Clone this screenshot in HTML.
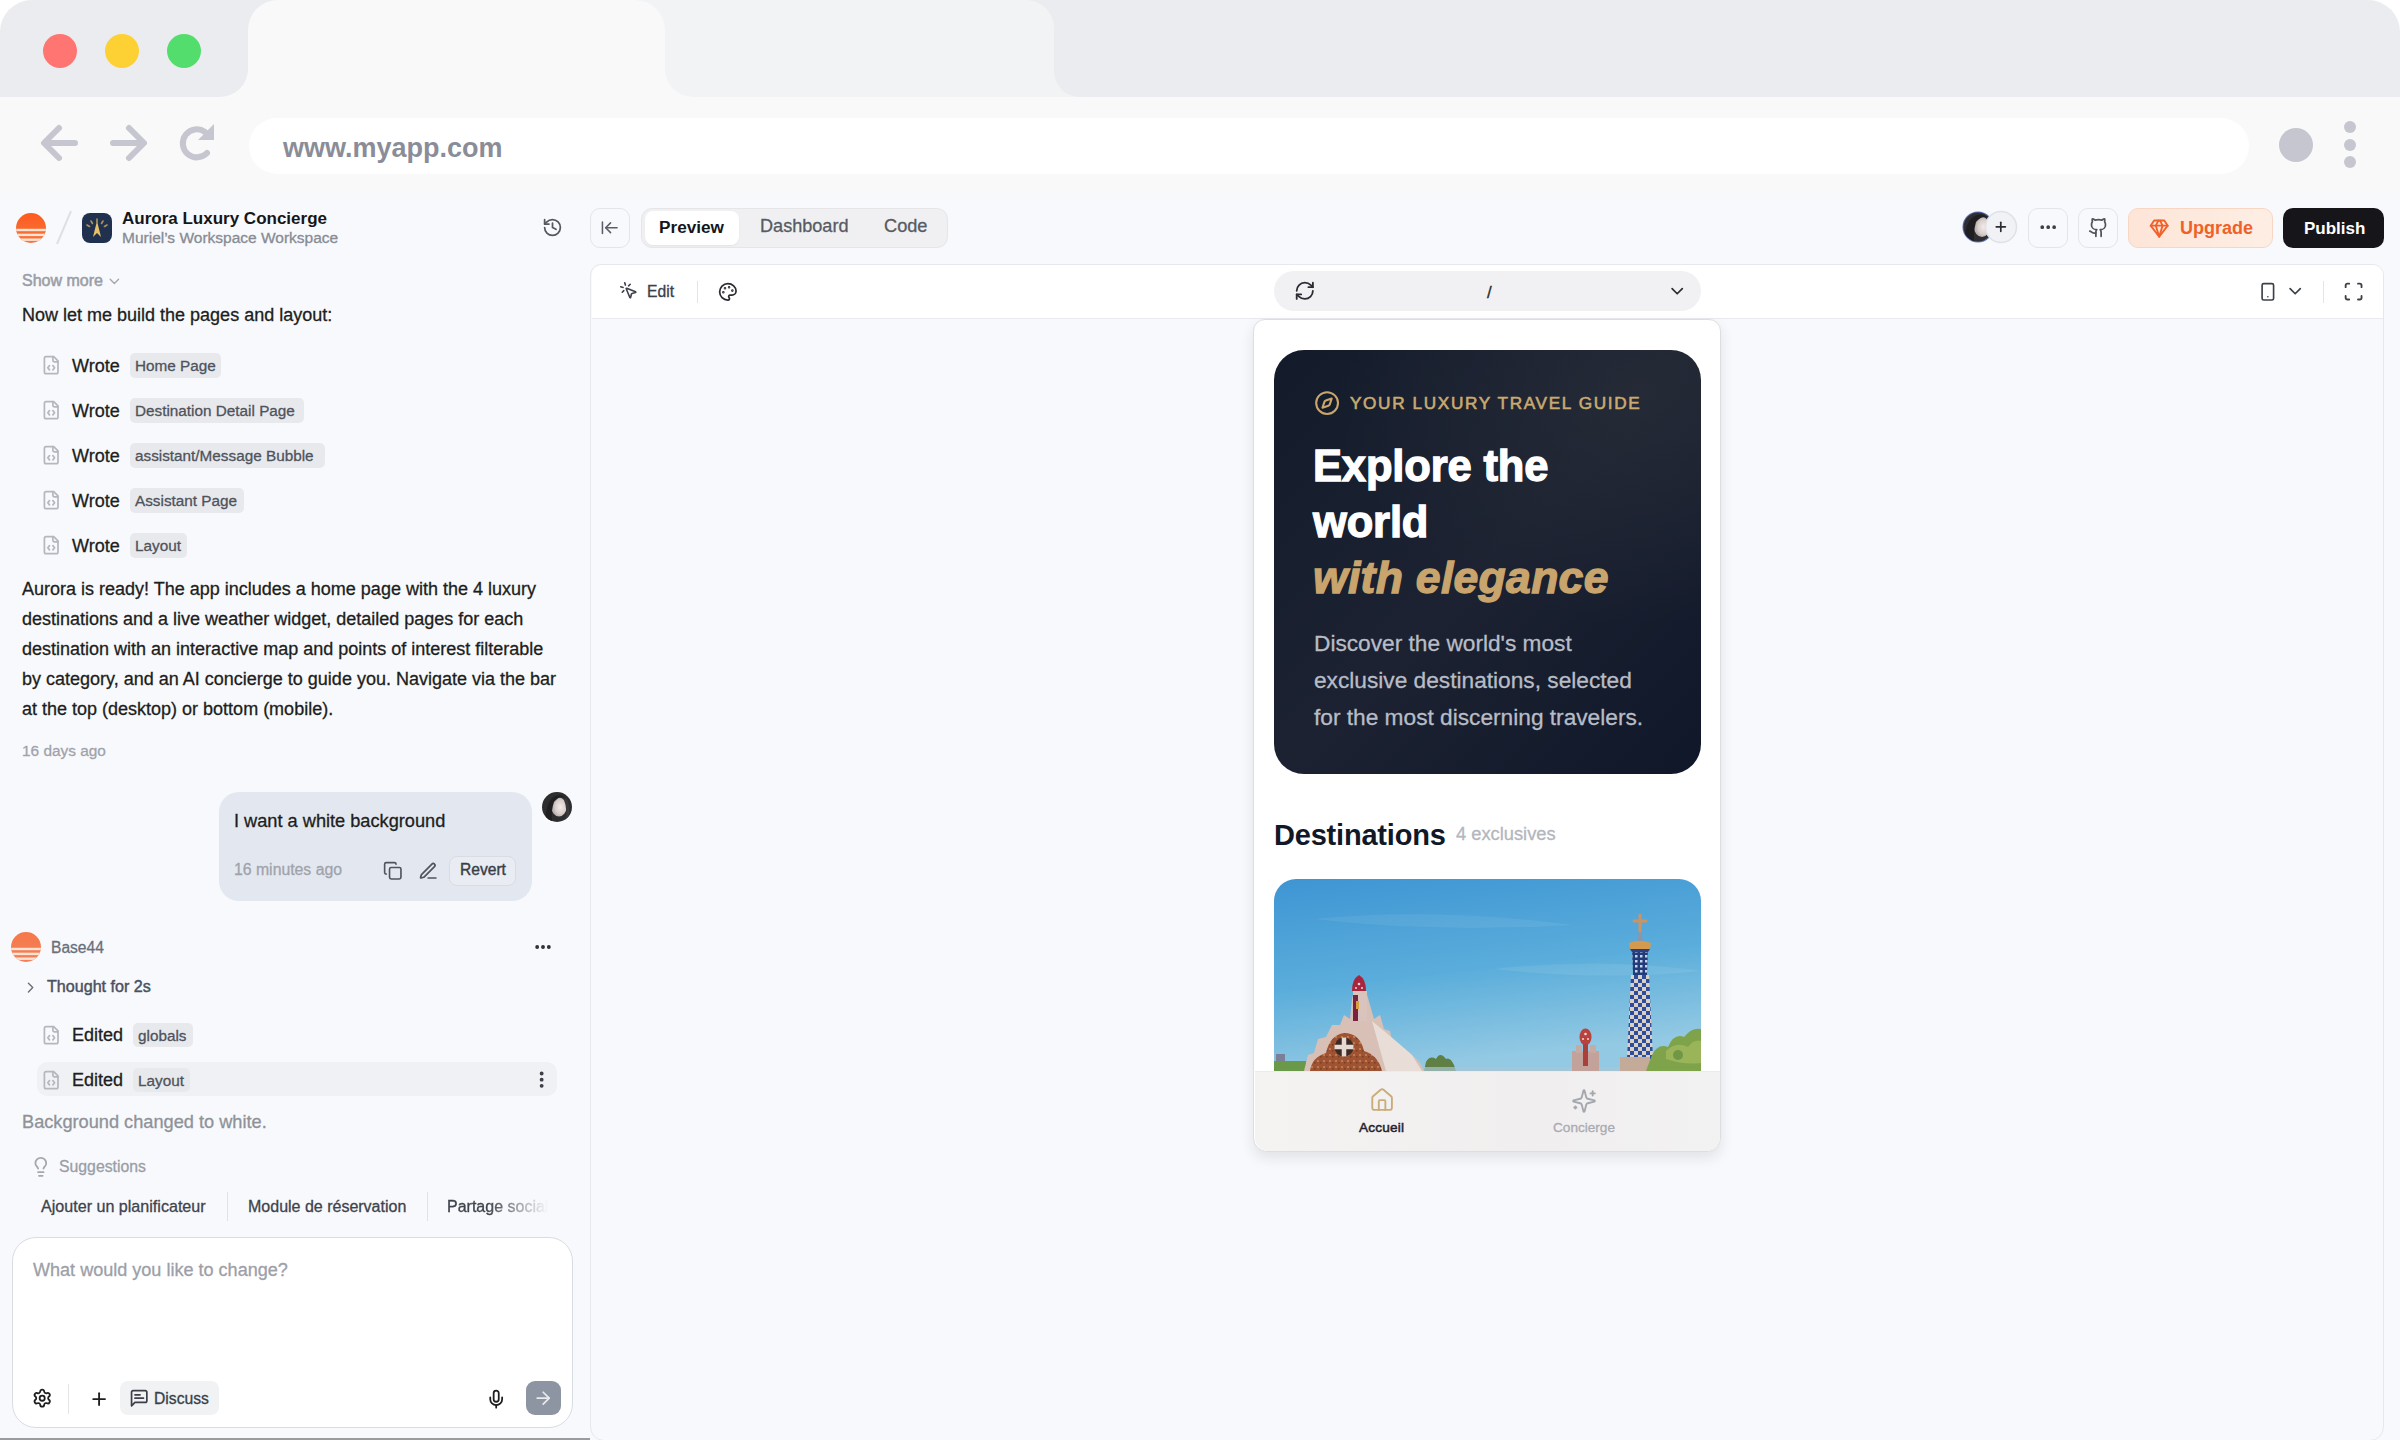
<!DOCTYPE html>
<html><head><meta charset="utf-8"><style>
html,body{margin:0;padding:0;width:2400px;height:1440px;overflow:hidden;background:#ffffff;}
body{position:relative;font-family:"Liberation Sans", sans-serif;}
.t{position:absolute;white-space:nowrap;-webkit-text-stroke:0.3px currentColor;}
.p{position:absolute;}
.r{position:absolute;}
</style></head><body>
<svg class="r" style="left:0px;top:0px;" width="2400" height="200" viewBox="0 0 2400 200">
<rect x="0" y="60" width="2400" height="140" fill="#f9f9f9"/>
<path d="M0,97 L0,32 A32,32 0 0 1 32,0 L2368,0 A32,32 0 0 1 2400,32 L2400,97 Z" fill="#ebecef"/>
<path d="M640,97 L640,0 L1026,0 A28,28 0 0 1 1054,28 L1054,71 A26,26 0 0 0 1080,97 Z" fill="#f2f3f5"/>
<path d="M220,97 A28,28 0 0 0 248,69 L248,30 A30,30 0 0 1 278,0 L635,0 A30,30 0 0 1 665,30 L665,69 A28,28 0 0 0 693,97 Z" fill="#f9f9f9"/>
<circle cx="60" cy="51" r="17" fill="#fe7572"/>
<circle cx="122" cy="51" r="17" fill="#fdd033"/>
<circle cx="184" cy="51" r="17" fill="#52dd6c"/>
<g stroke="#c5c6cf" stroke-width="6" fill="none" stroke-linecap="round" stroke-linejoin="round">
<path d="M75,143 L45,143 M59,128 L44,143 L59,158"/>
<path d="M113,143 L143,143 M129,128 L144,143 L129,158"/>
<path d="M207,153 A14,14 0 1 1 205,132"/>
</g>
<path d="M214,124 L214,140 L198,140 Z" fill="#c5c6cf"/>
<rect x="249" y="118" width="2000" height="56" rx="28" fill="#ffffff"/>
<circle cx="2296" cy="145" r="17" fill="#c5c6cf"/>
<circle cx="2350" cy="127" r="6" fill="#c5c6cf"/>
<circle cx="2350" cy="145" r="6" fill="#c5c6cf"/>
<circle cx="2350" cy="162" r="6" fill="#c5c6cf"/>
</svg>
<div class="t" style="left:283px;top:130.6px;font-size:27px;line-height:34px;color:#8a8d98;font-weight:700;font-style:normal;letter-spacing:0px;-webkit-text-stroke:0;">www.myapp.com</div>
<div class="r" style="left:0px;top:197px;width:2400px;height:1243px;background:#f8f9fc;"></div>
<div class="r" style="left:0px;top:190px;width:2400px;height:8px;background:linear-gradient(180deg,#f9f9f9,#f8f9fc);"></div>
<svg class="r" style="left:16px;top:213px;" width="30" height="30" viewBox="0 0 30 30"><defs><linearGradient id="lg1" x1="0" y1="0" x2="0" y2="1"><stop offset="0" stop-color="#ff5a1e"/><stop offset="1" stop-color="#f4773f"/></linearGradient>
<clipPath id="lg1c"><circle cx="15" cy="15" r="15"/></clipPath></defs>
<g clip-path="url(#lg1c)"><rect width="30" height="30" fill="url(#lg1)"/>
<rect x="0" y="15.8" width="30" height="2.4" fill="#fde3d4"/>
<rect x="0" y="20.7" width="30" height="2.4" fill="#fde3d4"/>
<rect x="0" y="25.5" width="30" height="2.4" fill="#fde3d4"/></g></svg>
<svg class="r" style="left:54px;top:208px;" width="20" height="40" viewBox="0 0 20 40"><line x1="3" y1="36" x2="17" y2="3" stroke="#dfe0e5" stroke-width="2"/></svg>
<svg class="r" style="left:82px;top:213px;" width="30" height="30" viewBox="0 0 30 30"><rect width="30" height="30" rx="8" fill="#20314f"/>
<g stroke="#c9a45a" stroke-width="1.6" stroke-linecap="round" opacity="0.85">
<line x1="15" y1="6" x2="15" y2="9"/><line x1="9" y1="8" x2="10.5" y2="10.5"/><line x1="21" y1="8" x2="19.5" y2="10.5"/>
<line x1="5" y1="12" x2="7.5" y2="13.5"/><line x1="25" y1="12" x2="22.5" y2="13.5"/></g>
<path d="M15,8 L19,24 L15,20 L11,24 Z" fill="#e6c16a"/></svg>
<div class="t" style="left:122px;top:207.6px;font-size:17px;line-height:21px;color:#15161a;font-weight:700;font-style:normal;letter-spacing:0px;-webkit-text-stroke:0;">Aurora Luxury Concierge</div>
<div class="t" style="left:122px;top:228.1px;font-size:15.5px;line-height:19px;color:#878b94;font-weight:400;font-style:normal;letter-spacing:0px;">Muriel’s Workspace Workspace</div>
<svg class="r" style="left:542.00px;top:217.40px;color:#55595f;" width="21" height="21" viewBox="0 0 24 24" fill="none" stroke="currentColor" stroke-width="2" stroke-linecap="round" stroke-linejoin="round"><path d="M3 12a9 9 0 1 0 9-9 9.75 9.75 0 0 0-6.74 2.74L3 8"/><path d="M3 3v5h5"/><path d="M12 7v5l4 2"/></svg>
<div class="t" style="left:22px;top:270.5px;font-size:16px;line-height:20px;color:#9a9ea7;font-weight:400;font-style:normal;letter-spacing:0px;-webkit-text-stroke:0.55px #9a9ea7;">Show more</div>
<svg class="r" style="left:106.00px;top:272.60px;color:#a5a9b0;" width="16.8" height="16.8" viewBox="0 0 24 24" fill="none" stroke="currentColor" stroke-width="2" stroke-linecap="round" stroke-linejoin="round"><path d="m6 9 6 6 6-6"/></svg>
<div class="t" style="left:22px;top:303.8px;font-size:18px;line-height:22px;color:#1d1e20;font-weight:400;font-style:normal;letter-spacing:0px;">Now let me build the pages and layout:</div>
<svg class="r" style="left:40.80px;top:354.80px;color:#b4b7be;" width="20.4" height="20.4" viewBox="0 0 24 24" fill="none" stroke="currentColor" stroke-width="2" stroke-linecap="round" stroke-linejoin="round"><path d="M10 12.5 8 15l2 2.5"/><path d="m14 12.5 2 2.5-2 2.5"/><path d="M14 2v4a2 2 0 0 0 2 2h4"/><path d="M15 2H6a2 2 0 0 0-2 2v16a2 2 0 0 0 2 2h12a2 2 0 0 0 2-2V7z"/></svg>
<div class="t" style="left:72px;top:354.8px;font-size:18px;line-height:22px;color:#1d1e20;font-weight:400;font-style:normal;letter-spacing:0px;">Wrote</div>
<div class="r" style="left:130px;top:353px;width:91px;height:25px;background:#e8e9ed;border-radius:5px;"></div>
<div class="t" style="left:135px;top:356.2px;font-size:15.3px;line-height:19px;color:#4f535b;font-weight:400;font-style:normal;letter-spacing:0px;">Home Page</div>
<svg class="r" style="left:40.80px;top:399.80px;color:#b4b7be;" width="20.4" height="20.4" viewBox="0 0 24 24" fill="none" stroke="currentColor" stroke-width="2" stroke-linecap="round" stroke-linejoin="round"><path d="M10 12.5 8 15l2 2.5"/><path d="m14 12.5 2 2.5-2 2.5"/><path d="M14 2v4a2 2 0 0 0 2 2h4"/><path d="M15 2H6a2 2 0 0 0-2 2v16a2 2 0 0 0 2 2h12a2 2 0 0 0 2-2V7z"/></svg>
<div class="t" style="left:72px;top:399.8px;font-size:18px;line-height:22px;color:#1d1e20;font-weight:400;font-style:normal;letter-spacing:0px;">Wrote</div>
<div class="r" style="left:130px;top:398px;width:174px;height:25px;background:#e8e9ed;border-radius:5px;"></div>
<div class="t" style="left:135px;top:401.2px;font-size:15.3px;line-height:19px;color:#4f535b;font-weight:400;font-style:normal;letter-spacing:0px;">Destination Detail Page</div>
<svg class="r" style="left:40.80px;top:444.80px;color:#b4b7be;" width="20.4" height="20.4" viewBox="0 0 24 24" fill="none" stroke="currentColor" stroke-width="2" stroke-linecap="round" stroke-linejoin="round"><path d="M10 12.5 8 15l2 2.5"/><path d="m14 12.5 2 2.5-2 2.5"/><path d="M14 2v4a2 2 0 0 0 2 2h4"/><path d="M15 2H6a2 2 0 0 0-2 2v16a2 2 0 0 0 2 2h12a2 2 0 0 0 2-2V7z"/></svg>
<div class="t" style="left:72px;top:444.8px;font-size:18px;line-height:22px;color:#1d1e20;font-weight:400;font-style:normal;letter-spacing:0px;">Wrote</div>
<div class="r" style="left:130px;top:443px;width:195px;height:25px;background:#e8e9ed;border-radius:5px;"></div>
<div class="t" style="left:135px;top:446.2px;font-size:15.3px;line-height:19px;color:#4f535b;font-weight:400;font-style:normal;letter-spacing:0px;">assistant/Message Bubble</div>
<svg class="r" style="left:40.80px;top:489.80px;color:#b4b7be;" width="20.4" height="20.4" viewBox="0 0 24 24" fill="none" stroke="currentColor" stroke-width="2" stroke-linecap="round" stroke-linejoin="round"><path d="M10 12.5 8 15l2 2.5"/><path d="m14 12.5 2 2.5-2 2.5"/><path d="M14 2v4a2 2 0 0 0 2 2h4"/><path d="M15 2H6a2 2 0 0 0-2 2v16a2 2 0 0 0 2 2h12a2 2 0 0 0 2-2V7z"/></svg>
<div class="t" style="left:72px;top:489.8px;font-size:18px;line-height:22px;color:#1d1e20;font-weight:400;font-style:normal;letter-spacing:0px;">Wrote</div>
<div class="r" style="left:130px;top:488px;width:114px;height:25px;background:#e8e9ed;border-radius:5px;"></div>
<div class="t" style="left:135px;top:491.2px;font-size:15.3px;line-height:19px;color:#4f535b;font-weight:400;font-style:normal;letter-spacing:0px;">Assistant Page</div>
<svg class="r" style="left:40.80px;top:534.80px;color:#b4b7be;" width="20.4" height="20.4" viewBox="0 0 24 24" fill="none" stroke="currentColor" stroke-width="2" stroke-linecap="round" stroke-linejoin="round"><path d="M10 12.5 8 15l2 2.5"/><path d="m14 12.5 2 2.5-2 2.5"/><path d="M14 2v4a2 2 0 0 0 2 2h4"/><path d="M15 2H6a2 2 0 0 0-2 2v16a2 2 0 0 0 2 2h12a2 2 0 0 0 2-2V7z"/></svg>
<div class="t" style="left:72px;top:534.8px;font-size:18px;line-height:22px;color:#1d1e20;font-weight:400;font-style:normal;letter-spacing:0px;">Wrote</div>
<div class="r" style="left:130px;top:533px;width:57px;height:25px;background:#e8e9ed;border-radius:5px;"></div>
<div class="t" style="left:135px;top:536.2px;font-size:15.3px;line-height:19px;color:#4f535b;font-weight:400;font-style:normal;letter-spacing:0px;">Layout</div>
<div class="t" style="left:22px;top:577.8px;font-size:18px;line-height:22px;color:#1d1e20;font-weight:400;font-style:normal;letter-spacing:0px;">Aurora is ready! The app includes a home page with the 4 luxury</div>
<div class="t" style="left:22px;top:607.8px;font-size:18px;line-height:22px;color:#1d1e20;font-weight:400;font-style:normal;letter-spacing:0px;">destinations and a live weather widget, detailed pages for each</div>
<div class="t" style="left:22px;top:637.8px;font-size:18px;line-height:22px;color:#1d1e20;font-weight:400;font-style:normal;letter-spacing:0px;">destination with an interactive map and points of interest filterable</div>
<div class="t" style="left:22px;top:667.8px;font-size:18px;line-height:22px;color:#1d1e20;font-weight:400;font-style:normal;letter-spacing:0px;">by category, and an AI concierge to guide you. Navigate via the bar</div>
<div class="t" style="left:22px;top:697.8px;font-size:18px;line-height:22px;color:#1d1e20;font-weight:400;font-style:normal;letter-spacing:0px;">at the top (desktop) or bottom (mobile).</div>
<div class="t" style="left:22px;top:741.2px;font-size:15.4px;line-height:19px;color:#9fa3ab;font-weight:400;font-style:normal;letter-spacing:0px;">16 days ago</div>
<div class="r" style="left:219px;top:792px;width:313px;height:109px;background:#e3e8f0;border-radius:20px;"></div>
<div class="t" style="left:234px;top:810.2px;font-size:18.2px;line-height:23px;color:#1d1e20;font-weight:400;font-style:normal;letter-spacing:0px;">I want a white background</div>
<div class="t" style="left:234px;top:859.5px;font-size:15.8px;line-height:20px;color:#9fa3ab;font-weight:400;font-style:normal;letter-spacing:0px;">16 minutes ago</div>
<svg class="r" style="left:383.20px;top:861.20px;color:#50545c;" width="19.6" height="19.6" viewBox="0 0 24 24" fill="none" stroke="currentColor" stroke-width="2" stroke-linecap="round" stroke-linejoin="round"><rect width="14" height="14" x="8" y="8" rx="2" ry="2"/><path d="M4 16c-1.1 0-2-.9-2-2V4c0-1.1.9-2 2-2h10c1.1 0 2 .9 2 2"/></svg>
<svg class="r" style="left:418.30px;top:860.80px;color:#50545c;" width="20.4" height="20.4" viewBox="0 0 24 24" fill="none" stroke="currentColor" stroke-width="2" stroke-linecap="round" stroke-linejoin="round"><path d="M12 20h9"/><path d="M16.376 3.622a1 1 0 0 1 3.002 3.002L7.368 18.635a2 2 0 0 1-.855.506l-2.872.838a.5.5 0 0 1-.62-.62l.838-2.872a2 2 0 0 1 .506-.854z"/></svg>
<div class="r" style="left:449px;top:856px;width:67px;height:30px;background:#e9ecf2;border:1px solid #d8dce4;border-radius:8px;box-sizing:border-box;"></div>
<div class="t" style="left:460px;top:859.6px;font-size:15.6px;line-height:20px;color:#3a3e46;font-weight:400;font-style:normal;letter-spacing:0px;-webkit-text-stroke:0.4px #3a3e46;">Revert</div>
<svg class="r" style="left:542px;top:792px;" width="30" height="30" viewBox="0 0 30 30"><defs><clipPath id="av1"><circle cx="15" cy="15" r="15"/></clipPath>
<radialGradient id="face1" cx="0.6" cy="0.5" r="0.5"><stop offset="0" stop-color="#f4ecea"/><stop offset="0.7" stop-color="#d9cfcc"/><stop offset="1" stop-color="#bdb3b0"/></radialGradient></defs>
<g clip-path="url(#av1)"><rect width="30" height="30" fill="#2d2c2e"/>
<ellipse cx="17" cy="15" rx="7.5" ry="9.5" fill="url(#face1)"/>
<path d="M3,30 Q4,12 10,6 Q16,1 23,5 Q17,4 12,10 Q9,18 10,30 Z" fill="#1f1e20"/>
<path d="M24,6 Q29,12 27,30 L23,30 Q26,18 22,8 Z" fill="#3a393b"/></g></svg>
<svg class="r" style="left:11px;top:932px;" width="30" height="30" viewBox="0 0 30 30"><defs><linearGradient id="lg2" x1="0" y1="0" x2="0" y2="1"><stop offset="0" stop-color="#f6794a"/><stop offset="1" stop-color="#f2805a"/></linearGradient>
<clipPath id="lg2c"><circle cx="15" cy="15" r="15"/></clipPath></defs>
<g clip-path="url(#lg2c)"><rect width="30" height="30" fill="url(#lg2)"/>
<rect x="0" y="15.8" width="30" height="2.4" fill="#fde3d4"/>
<rect x="0" y="20.7" width="30" height="2.4" fill="#fde3d4"/>
<rect x="0" y="25.5" width="30" height="2.4" fill="#fde3d4"/></g></svg>
<div class="t" style="left:51px;top:937.6px;font-size:15.6px;line-height:20px;color:#6a6f78;font-weight:400;font-style:normal;letter-spacing:0px;">Base44</div>
<svg class="r" style="left:532.50px;top:937.00px;color:#2a2c31;" width="20" height="20" viewBox="0 0 24 24" fill="none" stroke="currentColor" stroke-width="2.6" stroke-linecap="round" stroke-linejoin="round"><circle cx="12" cy="12" r="1"/><circle cx="19" cy="12" r="1"/><circle cx="5" cy="12" r="1"/></svg>
<svg class="r" style="left:22.30px;top:978.90px;color:#6b7079;" width="17.2" height="17.2" viewBox="0 0 24 24" fill="none" stroke="currentColor" stroke-width="2" stroke-linecap="round" stroke-linejoin="round"><path d="m9 18 6-6-6-6"/></svg>
<div class="t" style="left:47px;top:976.4px;font-size:16.1px;line-height:20px;color:#4a5160;font-weight:400;font-style:normal;letter-spacing:0px;-webkit-text-stroke:0.45px #4a5160;">Thought for 2s</div>
<svg class="r" style="left:40.80px;top:1024.80px;color:#b4b7be;" width="20.4" height="20.4" viewBox="0 0 24 24" fill="none" stroke="currentColor" stroke-width="2" stroke-linecap="round" stroke-linejoin="round"><path d="M10 12.5 8 15l2 2.5"/><path d="m14 12.5 2 2.5-2 2.5"/><path d="M14 2v4a2 2 0 0 0 2 2h4"/><path d="M15 2H6a2 2 0 0 0-2 2v16a2 2 0 0 0 2 2h12a2 2 0 0 0 2-2V7z"/></svg>
<div class="t" style="left:72px;top:1023.8px;font-size:18px;line-height:22px;color:#1d1e20;font-weight:400;font-style:normal;letter-spacing:0px;">Edited</div>
<div class="r" style="left:133px;top:1023px;width:60px;height:24px;background:#e8e9ed;border-radius:5px;"></div>
<div class="t" style="left:138px;top:1025.7px;font-size:15.3px;line-height:19px;color:#4f535b;font-weight:400;font-style:normal;letter-spacing:0px;">globals</div>
<div class="r" style="left:37px;top:1062px;width:520px;height:34px;background:#f0f1f5;border-radius:10px;"></div>
<svg class="r" style="left:40.80px;top:1069.80px;color:#b4b7be;" width="20.4" height="20.4" viewBox="0 0 24 24" fill="none" stroke="currentColor" stroke-width="2" stroke-linecap="round" stroke-linejoin="round"><path d="M10 12.5 8 15l2 2.5"/><path d="m14 12.5 2 2.5-2 2.5"/><path d="M14 2v4a2 2 0 0 0 2 2h4"/><path d="M15 2H6a2 2 0 0 0-2 2v16a2 2 0 0 0 2 2h12a2 2 0 0 0 2-2V7z"/></svg>
<div class="t" style="left:72px;top:1068.8px;font-size:18px;line-height:22px;color:#1d1e20;font-weight:400;font-style:normal;letter-spacing:0px;">Edited</div>
<div class="r" style="left:133px;top:1068px;width:57px;height:24px;background:#e8e9ed;border-radius:5px;"></div>
<div class="t" style="left:138px;top:1070.7px;font-size:15.3px;line-height:19px;color:#4f535b;font-weight:400;font-style:normal;letter-spacing:0px;">Layout</div>
<svg class="r" style="left:531.35px;top:1069.35px;color:#3a3d44;" width="21.3" height="21.3" viewBox="0 0 24 24" fill="none" stroke="currentColor" stroke-width="2.4" stroke-linecap="round" stroke-linejoin="round"><circle cx="12" cy="12" r="1"/><circle cx="12" cy="5" r="1"/><circle cx="12" cy="19" r="1"/></svg>
<div class="t" style="left:22px;top:1111.2px;font-size:18.2px;line-height:23px;color:#8e9299;font-weight:400;font-style:normal;letter-spacing:0px;">Background changed to white.</div>
<svg class="r" style="left:30.20px;top:1156.20px;color:#a3a7ae;" width="21.6" height="21.6" viewBox="0 0 24 24" fill="none" stroke="currentColor" stroke-width="2" stroke-linecap="round" stroke-linejoin="round"><path d="M15 14c.2-1 .7-1.7 1.5-2.5 1-.9 1.5-2.2 1.5-3.5A6 6 0 0 0 6 8c0 1 .2 2.2 1.5 3.5.7.7 1.3 1.5 1.5 2.5"/><path d="M9 18h6"/><path d="M10 22h4"/></svg>
<div class="t" style="left:59px;top:1156.5px;font-size:15.8px;line-height:20px;color:#9a9ea6;font-weight:400;font-style:normal;letter-spacing:0px;">Suggestions</div>
<div class="t" style="left:41px;top:1196.4px;font-size:16.1px;line-height:20px;color:#3e434c;font-weight:400;font-style:normal;letter-spacing:0px;">Ajouter un planificateur</div>
<div class="r" style="left:227px;top:1192px;width:1px;height:29px;background:#e0e2e6;"></div>
<div class="t" style="left:248px;top:1196.5px;font-size:16px;line-height:20px;color:#3e434c;font-weight:400;font-style:normal;letter-spacing:0px;">Module de réservation</div>
<div class="r" style="left:427px;top:1192px;width:1px;height:29px;background:#e0e2e6;"></div>
<div class="t" style="left:447px;top:1196.5px;font-size:16px;line-height:20px;color:#3e434c;font-weight:400;font-style:normal;letter-spacing:0px;-webkit-mask-image:linear-gradient(90deg,#000 40%,transparent 100%);mask-image:linear-gradient(90deg,#000 40%,transparent 100%);">Partage social</div>
<div class="r" style="left:12px;top:1237px;width:561px;height:191px;background:#ffffff;border:1.5px solid #d9dce1;border-radius:24px;box-sizing:border-box;"></div>
<div class="t" style="left:33px;top:1259.2px;font-size:18.06px;line-height:23px;color:#9ca0a8;font-weight:400;font-style:normal;letter-spacing:0px;">What would you like to change?</div>
<svg class="r" style="left:32.30px;top:1388.20px;color:#1d1e20;" width="20.4" height="20.4" viewBox="0 0 24 24" fill="none" stroke="currentColor" stroke-width="2.1" stroke-linecap="round" stroke-linejoin="round"><path d="M9.671 4.136a2.34 2.34 0 0 1 4.659 0 2.34 2.34 0 0 0 3.319 1.915 2.34 2.34 0 0 1 2.33 4.033 2.34 2.34 0 0 0 0 3.831 2.34 2.34 0 0 1-2.33 4.033 2.34 2.34 0 0 0-3.319 1.915 2.34 2.34 0 0 1-4.659 0 2.34 2.34 0 0 0-3.32-1.915 2.34 2.34 0 0 1-2.33-4.033 2.34 2.34 0 0 0 0-3.831A2.34 2.34 0 0 1 6.35 6.051a2.34 2.34 0 0 0 3.319-1.915"/><circle cx="12" cy="12" r="3"/></svg>
<div class="r" style="left:68px;top:1384px;width:1px;height:30px;background:#e3e5e9;"></div>
<svg class="r" style="left:88.65px;top:1388.50px;color:#1d1e20;" width="20.2" height="20.2" viewBox="0 0 24 24" fill="none" stroke="currentColor" stroke-width="2.2" stroke-linecap="round" stroke-linejoin="round"><path d="M5 12h14"/><path d="M12 5v14"/></svg>
<div class="r" style="left:120px;top:1381px;width:99px;height:34px;background:#f1f2f4;border-radius:8px;"></div>
<svg class="r" style="left:128.80px;top:1387.80px;color:#3a3f48;" width="20.4" height="20.4" viewBox="0 0 24 24" fill="none" stroke="currentColor" stroke-width="2" stroke-linecap="round" stroke-linejoin="round"><path d="M21 15a2 2 0 0 1-2 2H7l-4 4V5a2 2 0 0 1 2-2h14a2 2 0 0 1 2 2z"/><path d="M13 8H7"/><path d="M17 12H7"/></svg>
<div class="t" style="left:154px;top:1388.6px;font-size:15.7px;line-height:20px;color:#3a3f48;font-weight:400;font-style:normal;letter-spacing:0px;">Discuss</div>
<svg class="r" style="left:486.05px;top:1388.55px;color:#1d1e20;" width="20.4" height="20.4" viewBox="0 0 24 24" fill="none" stroke="currentColor" stroke-width="2.1" stroke-linecap="round" stroke-linejoin="round"><path d="M12 2a3 3 0 0 0-3 3v7a3 3 0 0 0 6 0V5a3 3 0 0 0-3-3Z"/><path d="M19 10v2a7 7 0 0 1-14 0v-2"/><line x1="12" x2="12" y1="19" y2="22"/></svg>
<div class="r" style="left:526px;top:1381px;width:35px;height:34px;background:#8e95a2;border-radius:9px;"></div>
<svg class="r" style="left:533.30px;top:1388.30px;color:#e8eaee;" width="20.4" height="20.4" viewBox="0 0 24 24" fill="none" stroke="currentColor" stroke-width="2" stroke-linecap="round" stroke-linejoin="round"><path d="M5 12h14"/><path d="m12 5 7 7-7 7"/></svg>
<div class="r" style="left:0px;top:1438px;width:590px;height:2px;background:#9a9b9e;"></div>
<div class="r" style="left:590px;top:208px;width:40px;height:40px;background:#f8f9fc;border:1.5px solid #e3e5ea;border-radius:10px;box-sizing:border-box;"></div>
<svg class="r" style="left:599.85px;top:218.15px;color:#5a5e66;" width="19.5" height="19.5" viewBox="0 0 24 24" fill="none" stroke="currentColor" stroke-width="1.9" stroke-linecap="round" stroke-linejoin="round"><path d="M3 19V5"/><path d="m13 6-6 6 6 6"/><path d="M7 12h14"/></svg>
<div class="r" style="left:641px;top:208px;width:307px;height:40px;background:#f0f0f2;border:1.5px solid #e6e6e9;border-radius:11px;box-sizing:border-box;"></div>
<div class="r" style="left:645px;top:211px;width:94px;height:34px;background:#ffffff;border-radius:8px;box-shadow:0 1px 2px rgba(0,0,0,0.05);"></div>
<div class="t" style="left:659px;top:216.0px;font-size:17.2px;line-height:22px;color:#15161a;font-weight:700;font-style:normal;letter-spacing:0px;-webkit-text-stroke:0;">Preview</div>
<div class="t" style="left:760px;top:215.2px;font-size:18.1px;line-height:23px;color:#575b62;font-weight:400;font-style:normal;letter-spacing:0px;">Dashboard</div>
<div class="t" style="left:884px;top:215.2px;font-size:18.2px;line-height:23px;color:#575b62;font-weight:400;font-style:normal;letter-spacing:0px;">Code</div>
<svg class="r" style="left:1962px;top:211px;" width="32" height="32" viewBox="0 0 32 32"><defs><clipPath id="av2"><circle cx="16" cy="16" r="14.5"/></clipPath>
<radialGradient id="face2" cx="0.6" cy="0.5" r="0.5"><stop offset="0" stop-color="#f4ecea"/><stop offset="0.7" stop-color="#d9cfcc"/><stop offset="1" stop-color="#bdb3b0"/></radialGradient></defs>
<circle cx="16" cy="16" r="15.5" fill="#5a6fb0"/>
<g clip-path="url(#av2)"><rect width="32" height="32" fill="#2f2f33"/>
<ellipse cx="20" cy="16" rx="8" ry="10" fill="url(#face2)"/>
<path d="M2,32 Q3,12 11,6 Q18,1 26,6 Q19,5 14,11 Q11,20 12,32 Z" fill="#1f1e20"/></g></svg>
<svg class="r" style="left:1984px;top:210px;" width="34" height="34" viewBox="0 0 34 34"><circle cx="17" cy="17" r="15.5" fill="#f1f2f5" stroke="#dfe1e6" stroke-width="1.5"/></svg>
<svg class="r" style="left:1993.20px;top:219.20px;color:#2a2c31;" width="15.6" height="15.6" viewBox="0 0 24 24" fill="none" stroke="currentColor" stroke-width="2.6" stroke-linecap="round" stroke-linejoin="round"><path d="M5 12h14"/><path d="M12 5v14"/></svg>
<div class="r" style="left:2028px;top:208px;width:40px;height:40px;background:#f8f9fc;border:1.5px solid #e3e5ea;border-radius:10px;box-sizing:border-box;"></div>
<svg class="r" style="left:2038.30px;top:217.30px;color:#3a3d44;" width="20.4" height="20.4" viewBox="0 0 24 24" fill="none" stroke="currentColor" stroke-width="2.4" stroke-linecap="round" stroke-linejoin="round"><circle cx="12" cy="12" r="1"/><circle cx="19" cy="12" r="1"/><circle cx="5" cy="12" r="1"/></svg>
<div class="r" style="left:2078px;top:208px;width:40px;height:40px;background:#f8f9fc;border:1.5px solid #e3e5ea;border-radius:10px;box-sizing:border-box;"></div>
<svg class="r" style="left:2087.78px;top:216.90px;color:#50545c;" width="21" height="21" viewBox="0 0 24 24" fill="none" stroke="currentColor" stroke-width="2" stroke-linecap="round" stroke-linejoin="round"><path d="M15 22v-4a4.8 4.8 0 0 0-1-3.5c3 0 6-2 6-5.5.08-1.25-.27-2.48-1-3.5.28-1.15.28-2.35 0-3.5 0 0-1 0-3 1.5-2.64-.5-5.36-.5-8 0C6 2 5 2 5 2c-.3 1.15-.3 2.35 0 3.5A5.403 5.403 0 0 0 4 9c0 3.5 3 5.5 6 5.5-.39.49-.68 1.05-.85 1.65-.17.6-.22 1.23-.15 1.85v4"/><path d="M9 18c-4.51 2-5-2-7-2"/></svg>
<div class="r" style="left:2128px;top:208px;width:145px;height:40px;background:linear-gradient(90deg,#fde5d8,#fdeee4);border:1.5px solid #f8d6c3;border-radius:10px;box-sizing:border-box;"></div>
<svg class="r" style="left:2149.20px;top:217.80px;color:#f0622a;" width="20.4" height="20.4" viewBox="0 0 24 24" fill="none" stroke="currentColor" stroke-width="2.2" stroke-linecap="round" stroke-linejoin="round"><path d="M6 3h12l4 6-10 13L2 9Z"/><path d="M11 3 8 9l4 13 4-13-3-6"/><path d="M2 9h20"/></svg>
<div class="t" style="left:2180px;top:216.8px;font-size:18px;line-height:22px;color:#ef6129;font-weight:700;font-style:normal;letter-spacing:0px;-webkit-text-stroke:0;">Upgrade</div>
<div class="r" style="left:2283px;top:208px;width:101px;height:40px;background:#16161a;border-radius:10px;"></div>
<div class="t" style="left:2304px;top:217.6px;font-size:17px;line-height:21px;color:#ffffff;font-weight:700;font-style:normal;letter-spacing:0px;-webkit-text-stroke:0;">Publish</div>
<div class="r" style="left:590px;top:263.5px;width:1794px;height:1177px;background:#f8f9fc;border:1.5px solid #e6e8ec;border-radius:11px 11px 14px 14px;box-sizing:border-box;"></div>
<div class="r" style="left:591.5px;top:265px;width:1791px;height:54px;background:#ffffff;border-radius:10px 10px 0 0;border-bottom:1.5px solid #e8eaee;box-sizing:border-box;"></div>
<svg class="r" style="left:618.90px;top:281.40px;color:#3c4049;" width="19.2" height="19.2" viewBox="0 0 24 24" fill="none" stroke="currentColor" stroke-width="2" stroke-linecap="round" stroke-linejoin="round"><path d="M14 4.1 12 6"/><path d="m5.1 8-2.9-.8"/><path d="m6 12-1.9 2"/><path d="M7.2 2.2 8 5.1"/><path d="M9.037 9.69a.498.498 0 0 1 .653-.653l11 4.5a.5.5 0 0 1-.074.949l-4.349 1.041a1 1 0 0 0-.74.739l-1.04 4.35a.5.5 0 0 1-.95.074z"/></svg>
<div class="t" style="left:647px;top:281.6px;font-size:15.7px;line-height:20px;color:#3c4049;font-weight:400;font-style:normal;letter-spacing:0px;">Edit</div>
<div class="r" style="left:697px;top:281px;width:1px;height:22px;background:#e3e5e9;"></div>
<svg class="r" style="left:718.05px;top:281.90px;color:#2a2c31;" width="19.7" height="19.7" viewBox="0 0 24 24" fill="none" stroke="currentColor" stroke-width="2.1" stroke-linecap="round" stroke-linejoin="round"><path d="M12 22a1 1 0 0 1 0-20 10 9 0 0 1 10 9 5 5 0 0 1-5 5h-2.25a1.75 1.75 0 0 0-1.4 2.8l.3.4a1.75 1.75 0 0 1-1.4 2.8z"/><circle cx="13.5" cy="6.5" r=".5" fill="currentColor"/><circle cx="17.5" cy="10.5" r=".5" fill="currentColor"/><circle cx="6.5" cy="12.5" r=".5" fill="currentColor"/><circle cx="8.5" cy="7.5" r=".5" fill="currentColor"/></svg>
<div class="r" style="left:1274px;top:271px;width:427px;height:40px;background:#f1f1f3;border-radius:20px;"></div>
<svg class="r" style="left:1293.60px;top:280.45px;color:#2a2c31;" width="21.6" height="21.6" viewBox="0 0 24 24" fill="none" stroke="currentColor" stroke-width="2" stroke-linecap="round" stroke-linejoin="round"><path d="M3 12a9 9 0 0 1 9-9 9.75 9.75 0 0 1 6.74 2.74L21 8"/><path d="M21 3v5h-5"/><path d="M21 12a9 9 0 0 1-9 9 9.75 9.75 0 0 1-6.74-2.74L3 16"/><path d="M8 16H3v5"/></svg>
<div class="t" style="left:1487px;top:281.6px;font-size:17px;line-height:21px;color:#2a2c31;font-weight:400;font-style:normal;letter-spacing:0px;">/</div>
<svg class="r" style="left:1666.70px;top:281.05px;color:#2a2c31;" width="20.4" height="20.4" viewBox="0 0 24 24" fill="none" stroke="currentColor" stroke-width="2" stroke-linecap="round" stroke-linejoin="round"><path d="m6 9 6 6 6-6"/></svg>
<svg class="r" style="left:2258.40px;top:281.65px;color:#3c4049;" width="19.7" height="19.7" viewBox="0 0 24 24" fill="none" stroke="currentColor" stroke-width="2" stroke-linecap="round" stroke-linejoin="round"><rect width="14" height="20" x="5" y="2" rx="2" ry="2"/><path d="M12 18h.01"/></svg>
<svg class="r" style="left:2284.80px;top:281.40px;color:#3c4049;" width="20.4" height="20.4" viewBox="0 0 24 24" fill="none" stroke="currentColor" stroke-width="2" stroke-linecap="round" stroke-linejoin="round"><path d="m6 9 6 6 6-6"/></svg>
<div class="r" style="left:2323px;top:281px;width:1px;height:22px;background:#e3e5e9;"></div>
<svg class="r" style="left:2343.00px;top:280.90px;color:#3c4049;" width="21.2" height="21.2" viewBox="0 0 24 24" fill="none" stroke="currentColor" stroke-width="2.1" stroke-linecap="round" stroke-linejoin="round"><path d="M3 7V5a2 2 0 0 1 2-2h2"/><path d="M17 3h2a2 2 0 0 1 2 2v2"/><path d="M21 17v2a2 2 0 0 1-2 2h-2"/><path d="M7 21H5a2 2 0 0 1-2-2v-2"/></svg>
<div class="r" style="left:1253px;top:319px;width:468px;height:833px;background:#ffffff;border:1.5px solid #dcdee3;border-radius:12px 12px 14px 14px;box-sizing:border-box;box-shadow:0 6px 14px rgba(20,25,40,0.10);overflow:hidden;"></div>
<div class="r" style="left:1274px;top:350px;width:427px;height:424px;background:radial-gradient(ellipse 70% 55% at 85% 10%, rgba(46,50,60,0.5), rgba(48,52,62,0) 100%),linear-gradient(135deg,#131b2b 0%,#1c2231 50%,#0f1729 100%);border-radius:30px;"></div>
<svg class="r" style="left:1313.50px;top:389.70px;color:#c8a66c;" width="26.2" height="26.2" viewBox="0 0 24 24" fill="none" stroke="currentColor" stroke-width="1.9" stroke-linecap="round" stroke-linejoin="round"><path d="m16.24 7.76-1.804 5.411a2 2 0 0 1-1.265 1.265L7.76 16.24l1.804-5.411a2 2 0 0 1 1.265-1.265z"/><circle cx="12" cy="12" r="10"/></svg>
<div class="t" style="left:1350px;top:392.0px;font-size:17.2px;line-height:22px;color:#c9aa70;font-weight:400;font-style:normal;letter-spacing:1.63px;-webkit-text-stroke:0.6px #c9aa70;">YOUR LUXURY TRAVEL GUIDE</div>
<div class="t" style="left:1313px;top:438.9px;font-size:43.5px;line-height:54px;color:#ffffff;font-weight:700;font-style:normal;letter-spacing:-0.15px;-webkit-text-stroke:1.3px #ffffff;">Explore the</div>
<div class="t" style="left:1313px;top:494.9px;font-size:43.5px;line-height:54px;color:#ffffff;font-weight:700;font-style:normal;letter-spacing:-0.15px;-webkit-text-stroke:1.3px #ffffff;">world</div>
<div class="t" style="left:1313px;top:549.6px;font-size:44.5px;line-height:56px;color:#c9a56d;font-weight:700;font-style:italic;letter-spacing:0.3px;-webkit-text-stroke:1.3px #c9a56d;">with elegance</div>
<div class="t" style="left:1314px;top:629.1px;font-size:22.7px;line-height:28px;color:#b8bcc6;font-weight:400;font-style:normal;letter-spacing:0px;">Discover the world's most</div>
<div class="t" style="left:1314px;top:665.9px;font-size:22.7px;line-height:28px;color:#b8bcc6;font-weight:400;font-style:normal;letter-spacing:0px;">exclusive destinations, selected</div>
<div class="t" style="left:1314px;top:702.7px;font-size:22.7px;line-height:28px;color:#b8bcc6;font-weight:400;font-style:normal;letter-spacing:0px;">for the most discerning travelers.</div>
<div class="t" style="left:1274px;top:817.0px;font-size:29px;line-height:36px;color:#111827;font-weight:700;font-style:normal;letter-spacing:-0.2px;-webkit-text-stroke:0;">Destinations</div>
<div class="t" style="left:1456px;top:822.2px;font-size:18.3px;line-height:23px;color:#b3b6bd;font-weight:400;font-style:normal;letter-spacing:0px;">4 exclusives</div>
<svg class="r" style="left:1274px;top:879px;" width="427" height="192" viewBox="0 0 427 192"><defs>
<linearGradient id="sky" x1="0" y1="0" x2="0.25" y2="1"><stop offset="0" stop-color="#3e95d3"/><stop offset="0.55" stop-color="#5aaddb"/><stop offset="1" stop-color="#93c9e3"/></linearGradient>
<clipPath id="phc"><path d="M0,22 A22,22 0 0 1 22,0 L405,0 A22,22 0 0 1 427,22 L427,192 L0,192 Z"/></clipPath>
<pattern id="chk" width="8" height="8" patternUnits="userSpaceOnUse"><rect width="8" height="8" fill="#d9d2c4"/><rect width="4" height="4" fill="#2f4c9c"/><rect x="4" y="4" width="4" height="4" fill="#2f4c9c"/></pattern>
<pattern id="lat" width="5" height="5" patternUnits="userSpaceOnUse"><rect width="5" height="5" fill="#233a7a"/><rect x="1" y="1" width="2.5" height="2.5" fill="#c7d3e6"/></pattern>
<pattern id="mos" width="6" height="6" patternUnits="userSpaceOnUse"><rect width="6" height="6" fill="#9e5232"/><rect x="1" y="1" width="2" height="2" fill="#c07a4e"/><rect x="4" y="3" width="1.5" height="1.5" fill="#7d3c22"/></pattern>
<filter id="soft"><feGaussianBlur stdDeviation="0.45"/></filter>
</defs>
<g clip-path="url(#phc)">
<rect width="427" height="192" fill="url(#sky)"/>
<path d="M40,40 Q160,28 300,46 Q160,54 40,40 Z" fill="#ffffff" opacity="0.07"/>
<path d="M220,90 Q330,78 427,92 Q330,102 220,90 Z" fill="#ffffff" opacity="0.08"/>
<g filter="url(#soft)">
<!-- far left -->
<rect x="0" y="182" width="32" height="10" fill="#6b9a4a"/>
<rect x="2" y="175" width="9" height="8" fill="#7c7f98"/>
<!-- gatehouse outer (pinkish white) -->
<path d="M30,192 L34,176 L40,174 L44,160 L52,158 L58,146 L66,146 L70,136 L76,140 L78,120 L80,112 L86,106 L92,112 L96,126 L100,140 L106,136 L110,150 L116,152 L118,162 Q136,172 146,184 L150,192 Z" fill="#d8c0b6"/>
<path d="M98,142 Q120,160 138,176 L148,192 L112,192 Z" fill="#e9ddd8"/>
<!-- mosaic arches -->
<path d="M36,192 Q38,178 52,174 Q56,156 70,154 Q86,154 90,172 Q104,176 108,192 Z" fill="url(#mos)"/>
<circle cx="70" cy="168" r="9.5" fill="#3c2b26"/>
<path d="M70,158.5 L70,177.5 M60.5,168 L79.5,168" stroke="#e5d9d2" stroke-width="4.5"/>
<!-- spire -->
<rect x="79" y="112" width="14" height="30" fill="#d9c4bd"/>
<rect x="79" y="116" width="5" height="26" fill="#7a2340"/>
<rect x="82" y="122" width="3" height="8" fill="#d7a040"/>
<path d="M78,112 Q78,100 85,96 Q92,100 92,112 Z" fill="#a8273d"/>
<circle cx="85" cy="105" r="1.3" fill="#f0d8d8"/><circle cx="82" cy="109" r="1" fill="#f0d8d8"/><circle cx="88" cy="109" r="1" fill="#f0d8d8"/>
<!-- palm -->
<path d="M150,192 L152,183 Q156,176 162,180 Q166,172 172,180 Q176,178 180,186 L182,192 Z" fill="#5e7f45"/>
<!-- horizon haze -->
<rect x="150" y="188" width="277" height="4" fill="#a9c6d4" opacity="0.7"/>
<!-- small red tower -->
<rect x="298" y="172" width="27" height="20" fill="#c2a29b"/>
<rect x="302" y="166" width="6" height="8" fill="#c7aaa2"/><rect x="316" y="166" width="6" height="8" fill="#c7aaa2"/>
<ellipse cx="311.5" cy="158" rx="6" ry="8.5" fill="#b8433d"/>
<circle cx="311.5" cy="155" r="1.3" fill="#f1d7d3"/><circle cx="309" cy="160" r="1" fill="#f1d7d3"/><circle cx="314" cy="160" r="1" fill="#f1d7d3"/>
<rect x="309" y="165" width="5" height="22" fill="#a9403a"/>
<!-- big tower -->
<path d="M353,180 L357,96 L375,96 L379,180 Z" fill="url(#chk)"/>
<path d="M358,68 L374,68 L373,96 L359,96 Z" fill="url(#lat)"/>
<path d="M355,64 Q366,59 377,64 L376,70 L356,70 Z" fill="#d49a4e"/>
<path d="M356,70 L376,70 L374,73 L358,73 Z" fill="#2c3f84"/>
<path d="M363,62 L366,48 L369,62 Z" fill="#8d96a8"/>
<path d="M366,36 L366,52 M360,42 L372,42" stroke="#cc9462" stroke-width="3" stroke-linecap="round"/>
<rect x="346" y="178" width="30" height="14" fill="#c3aa99"/>
<!-- right trees -->
<path d="M372,192 L378,176 Q384,164 394,168 Q400,154 410,158 Q418,148 427,150 L427,192 Z" fill="#7ea34c"/>
<path d="M392,172 Q402,162 414,168 Q420,160 427,162 L427,184 Q410,186 392,180 Z" fill="#a1b85e" opacity="0.8"/>
<circle cx="404" cy="176" r="5" fill="#5e8a3c" opacity="0.7"/>
</g>
</g></svg>
<div class="r" style="left:1254.5px;top:1071px;width:465px;height:80px;background:linear-gradient(90deg,#f4f3f2,#f0eeee 60%,#f3f2f2);border-top:1px solid #eceaea;border-radius:0 0 13px 13px;box-sizing:border-box;"></div>
<svg class="r" style="left:1368.60px;top:1086.90px;color:#c9ac78;" width="26.2" height="26.2" viewBox="0 0 24 24" fill="none" stroke="currentColor" stroke-width="1.7" stroke-linecap="round" stroke-linejoin="round"><path d="M15 21v-8a1 1 0 0 0-1-1h-4a1 1 0 0 0-1 1v8"/><path d="M3 10a2 2 0 0 1 .709-1.528l7-5.999a2 2 0 0 1 2.582 0l7 5.999A2 2 0 0 1 21 10v9a2 2 0 0 1-2 2H5a2 2 0 0 1-2-2z"/></svg>
<div class="t" style="left:1359px;top:1118.8px;font-size:13.6px;line-height:17px;color:#1e2330;font-weight:400;font-style:normal;letter-spacing:0.2px;-webkit-text-stroke:0.5px #1e2330;">Accueil</div>
<svg class="r" style="left:1571.25px;top:1087.50px;color:#a4a7ad;" width="26" height="26" viewBox="0 0 24 24" fill="none" stroke="currentColor" stroke-width="1.7" stroke-linecap="round" stroke-linejoin="round"><path d="M9.937 15.5A2 2 0 0 0 8.5 14.063l-6.135-1.582a.5.5 0 0 1 0-.962L8.5 9.936A2 2 0 0 0 9.937 8.5l1.582-6.135a.5.5 0 0 1 .963 0L14.063 8.5A2 2 0 0 0 15.5 9.937l6.135 1.581a.5.5 0 0 1 0 .964L15.5 14.063a2 2 0 0 0-1.437 1.437l-1.582 6.135a.5.5 0 0 1-.963 0z"/><path d="M20 3v4"/><path d="M22 5h-4"/><path d="M4 17v2"/><path d="M5 18H3"/></svg>
<div class="t" style="left:1553px;top:1118.8px;font-size:13.6px;line-height:17px;color:#a9abb1;font-weight:400;font-style:normal;letter-spacing:0px;">Concierge</div>
</body></html>
